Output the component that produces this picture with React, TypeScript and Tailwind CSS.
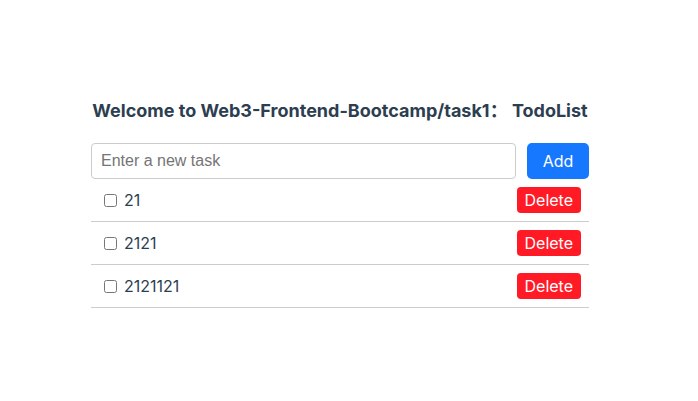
import { useState } from "react";

type Task = { id: number; text: string; done: boolean };

export default function App() {
  const [tasks, setTasks] = useState<Task[]>([
    { id: 1, text: "21", done: false },
    { id: 2, text: "2121", done: false },
    { id: 3, text: "2121121", done: false },
  ]);
  const [input, setInput] = useState("");

  const add = () => {
    if (!input.trim()) return;
    setTasks([...tasks, { id: Date.now(), text: input, done: false }]);
    setInput("");
  };

  return (
    <div className="min-h-screen bg-white font-['Inter','Noto_Sans_CJK_SC',sans-serif] text-[#2c3e50]">
      <div className="ml-[91px] w-[498px] pt-[98px]">
        <h1 className="whitespace-nowrap text-center text-[18px] font-bold leading-[25px]">
          Welcome to Web3-Frontend-Bootcamp/task1： TodoList
        </h1>

        <div className="mt-[20px] flex gap-[11px]">
          <input
            value={input}
            onChange={(e) => setInput(e.target.value)}
            placeholder="Enter a new task"
            className="h-[36px] flex-1 rounded-[4px] border border-[#ccc] px-[9px] font-['Liberation_Sans',sans-serif] text-base text-[#333] placeholder:text-[#757575] outline-none"
          />
          <button
            onClick={add}
            className="h-[36px] w-[62px] rounded-[5px] bg-[#1677ff] text-base text-white"
          >
            Add
          </button>
        </div>

        <ul>
          {tasks.map((t) => (
            <li
              key={t.id}
              className="flex h-[43px] items-center justify-between border-b border-[#ccc] pl-[13px] pr-2"
            >
              <label className="flex items-center gap-[7px] text-base">
                <input
                  type="checkbox"
                  checked={t.done}
                  onChange={() =>
                    setTasks(tasks.map((x) => (x.id === t.id ? { ...x, done: !x.done } : x)))
                  }
                  className="h-[13px] w-[13px]"
                />
                <span className={t.done ? "line-through" : ""}>{t.text}</span>
              </label>
              <button
                onClick={() => setTasks(tasks.filter((x) => x.id !== t.id))}
                className="h-[26px] rounded-[4px] bg-[#ff1a26] px-2 text-base leading-none text-white"
              >
                Delete
              </button>
            </li>
          ))}
        </ul>
      </div>
    </div>
  );
}
